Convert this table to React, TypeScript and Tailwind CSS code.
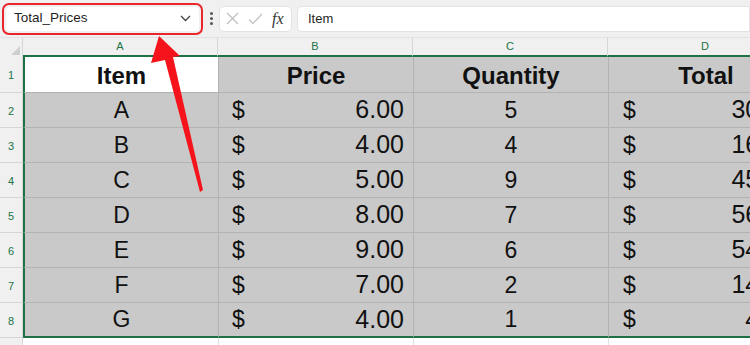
import React from 'react'

const rows = [
  { item: 'A', price: '6.00', qty: '5', total: '30.00' },
  { item: 'B', price: '4.00', qty: '4', total: '16.00' },
  { item: 'C', price: '5.00', qty: '9', total: '45.00' },
  { item: 'D', price: '8.00', qty: '7', total: '56.00' },
  { item: 'E', price: '9.00', qty: '6', total: '54.00' },
  { item: 'F', price: '7.00', qty: '2', total: '14.00' },
  { item: 'G', price: '4.00', qty: '1', total: '4.00' },
]

const font = { fontFamily: '"Liberation Sans", Arial, sans-serif' }

function FormulaBar() {
  return (
    <div className="flex h-[37px] items-center bg-[#f0f0f0] pl-[2px]">
      <div className="h-[32px] w-[201px] rounded-[7px] border-2 border-[#e8262b] p-[2px]">
        <div className="flex h-full items-center justify-between rounded-[4px] bg-white pl-[8px] pr-[8px]">
          <span className="text-[13.5px] text-[#1f1f1f]">Total_Prices</span>
          <svg width="11" height="7" viewBox="0 0 11 7" fill="none">
            <path d="M1 1l4.5 4.5L10 1" stroke="#444" strokeWidth="1.3" />
          </svg>
        </div>
      </div>
      <div className="flex w-[16px] flex-col items-center gap-[2px]">
        <span className="h-[3px] w-[3px] rounded-full bg-[#555]" />
        <span className="h-[3px] w-[3px] rounded-full bg-[#555]" />
        <span className="h-[3px] w-[3px] rounded-full bg-[#555]" />
      </div>
      <div className="flex h-[26px] w-[73px] items-center gap-[9px] rounded-[5px] border border-[#e3e3e3] bg-white pl-[6px]">
        <svg width="13" height="13" viewBox="0 0 13 13" fill="none">
          <path d="M1 1l11 11M12 1L1 12" stroke="#bdbdbd" strokeWidth="1.2" />
        </svg>
        <svg width="15" height="12" viewBox="0 0 15 12" fill="none">
          <path d="M1 6.5l4 4L14 1" stroke="#bdbdbd" strokeWidth="1.2" />
        </svg>
        <span
          className="text-[16px] italic text-[#333]"
          style={{ fontFamily: '"Liberation Serif", "Times New Roman", serif' }}
        >
          fx
        </span>
      </div>
      <div className="ml-[5px] flex h-[26px] flex-1 items-center rounded-l-[5px] border border-[#e3e3e3] bg-white pl-[10px]">
        <span className="text-[13px] text-[#1f1f1f]">Item</span>
      </div>
    </div>
  )
}

function RowNum({ n, h }: { n?: number; h: string }) {
  return (
    <div
      className={`flex w-[23px] shrink-0 items-center justify-center border-b border-r border-[#d6d6d6] bg-[#f0f0f0] pt-[2px] text-[11px] text-[#217346] ${h}`}
    >
      {n}
    </div>
  )
}

export default function App() {
  return (
    <div className="relative h-[345px] w-[750px] overflow-hidden bg-white" style={font}>
      <FormulaBar />

      {/* column headers */}
      <div className="flex h-[20px] border-t border-[#e2e2e2] bg-[#f0f0f0]">
        <div className="relative w-[23px] shrink-0 border-r border-[#d6d6d6]">
          <svg className="absolute bottom-[2px] right-[2px]" width="9" height="9" viewBox="0 0 9 9">
            <path d="M9 0V9H0z" fill="#cfcfcf" />
          </svg>
        </div>
        {['A', 'B', 'C', 'D'].map((c) => (
          <div
            key={c}
            className="flex w-[195px] shrink-0 items-center justify-center border-b-2 border-r border-b-[#1e7145] border-r-[#d6d6d6] text-[11px] text-[#217346]"
          >
            {c}
          </div>
        ))}
      </div>

      {/* header row 1 */}
      <div className="flex">
        <RowNum n={1} h="h-[36px]" />
        <div className="flex h-[36px] w-[196px] shrink-0 items-center justify-center border-b border-l-2 border-r border-b-[#b3b3b3] border-l-[#1e7145] border-r-[#b3b3b3] bg-white pt-[2px] text-[24px] font-bold text-[#111]">
          Item
        </div>
        {['Price', 'Quantity', 'Total'].map((h) => (
          <div
            key={h}
            className="flex h-[36px] w-[195px] shrink-0 items-center justify-center border-b border-r border-[#b3b3b3] bg-[#c9c9c9] pt-[2px] text-[24px] font-bold text-[#111]"
          >
            {h}
          </div>
        ))}
      </div>

      {rows.map((r, i) => {
        const last = i === rows.length - 1
        const bottom = last ? 'h-[35px] border-b-2 border-b-[#1e7145]' : 'h-[35px] border-b border-b-[#b3b3b3]'
        return (
          <div key={r.item} className="flex">
            <RowNum n={i + 2} h="h-[35px]" />
            <div
              className={`flex w-[196px] shrink-0 items-center justify-center border-l-2 border-r border-l-[#1e7145] border-r-[#b3b3b3] bg-[#c9c9c9] text-[23px] text-[#111] ${bottom}`}
            >
              {r.item}
            </div>
            <div
              className={`flex w-[195px] shrink-0 items-center justify-between border-r border-r-[#b3b3b3] bg-[#c9c9c9] pl-[13px] pr-[9px] text-[23px] text-[#111] ${bottom}`}
            >
              <span>$</span>
              <span className="text-[25px]">{r.price}</span>
            </div>
            <div
              className={`flex w-[195px] shrink-0 items-center justify-center border-r border-r-[#b3b3b3] bg-[#c9c9c9] text-[23px] text-[#111] ${bottom}`}
            >
              {r.qty}
            </div>
            <div
              className={`flex w-[195px] shrink-0 items-center justify-between border-r border-r-[#b3b3b3] bg-[#c9c9c9] pl-[14px] pr-[9px] text-[23px] text-[#111] ${bottom}`}
            >
              <span>$</span>
              <span className="text-[25px]">{r.total}</span>
            </div>
          </div>
        )
      })}

      {/* row 9 */}
      <div className="flex">
        <RowNum h="h-[30px]" />
        {[0, 1, 2, 3].map((k) => (
          <div key={k} className={`h-[30px] shrink-0 border-r border-[#e1e1e1] ${k === 0 ? 'w-[196px]' : 'w-[195px]'}`} />
        ))}
      </div>

      {/* annotation arrow */}
      <svg className="pointer-events-none absolute left-0 top-0" width="750" height="345">
        <polygon
          points="159,36 180,56 173,57 203,190 200,192 165,60 151,63"
          fill="#f5141c"
        />
      </svg>
    </div>
  )
}
